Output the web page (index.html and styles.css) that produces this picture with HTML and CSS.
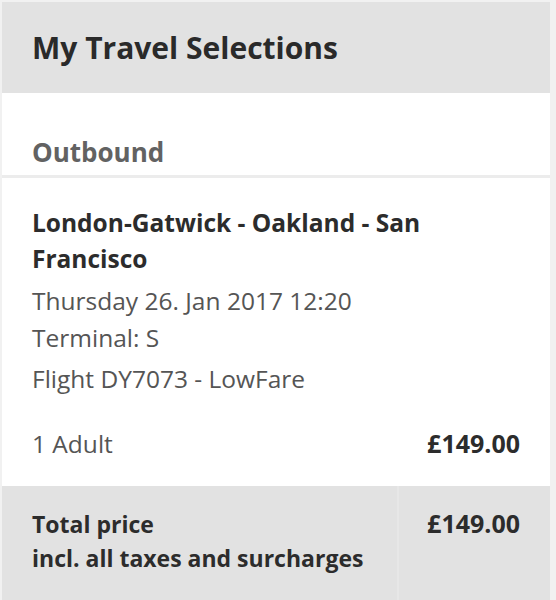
FILE: index.html
```html
<!DOCTYPE html>
<html lang="en">
<head>
<meta charset="utf-8">
<title>My Travel Selections</title>
<link rel="stylesheet" href="styles.css">
</head>
<body>
<div class="panel">
  <header class="panel-head">
    <h1 class="panel-title">My Travel Selections</h1>
  </header>
  <section class="direction">
    <h2 class="direction-title">Outbound</h2>
  </section>
  <section class="journey">
    <h3 class="route">London-Gatwick - Oakland - San Francisco</h3>
    <p class="info">Thursday 26. Jan 2017 12:20<br>Terminal: S</p>
    <p class="info flight">Flight DY7073 - LowFare</p>
    <div class="fare-row">
      <span class="pax">1 Adult</span>
      <span class="amount">£149.00</span>
    </div>
  </section>
  <section class="total">
    <div class="total-label">
      <strong>Total price</strong>
      <strong>incl. all taxes and surcharges</strong>
    </div>
    <div class="total-amount">£149.00</div>
  </section>
</div>
</body>
</html>
```
FILE: styles.css
```css
html, body {
  margin: 0;
  padding: 0;
  background: #f1f1f1;
}
body {
  font-family: "Open Sans", "Liberation Sans", sans-serif;
  color: #2c2c2c;
}
.panel {
  width: 548px;
  height: 598px;
  margin: 2px 0 0 2px;
  display: flex;
  flex-direction: column;
  background: #fff;
  overflow: hidden;
}
.panel-head {
  height: 91px;
  flex: none;
  background: #e2e2e2;
  display: flex;
  align-items: center;
  padding: 0 30px;
}
.panel-title {
  margin: 0;
  font-size: 30px;
  font-weight: 700;
  color: #2a2a2a;
  line-height: 34px;
}
.direction {
  height: 85px;
  flex: none;
  display: flex;
  align-items: flex-end;
  padding: 0 30px 8px;
  box-sizing: border-box;
  border-bottom: 3px solid #ececec;
}
.direction-title {
  margin: 0;
  font-size: 26px;
  font-weight: 700;
  color: #626262;
  line-height: 30px;
}
.journey {
  height: 308px;
  flex: none;
  padding: 27px 30px 0;
  box-sizing: border-box;
  display: flex;
  flex-direction: column;
}
.route {
  margin: 0;
  font-size: 24.5px;
  font-weight: 700;
  line-height: 36px;
  color: #2c2c2c;
  max-width: 440px;
}
.info {
  margin: 5px 0 0;
  font-size: 24.5px;
  line-height: 37px;
  color: #555;
}
.flight {
  margin-top: 4px;
}
.fare-row {
  margin-top: 31px;
  display: flex;
  justify-content: space-between;
  align-items: baseline;
  font-size: 24.5px;
  line-height: 30px;
}
.pax {
  color: #555;
}
.amount {
  font-size: 25px;
  font-weight: 700;
  color: #2c2c2c;
}
.total {
  flex: 1;
  background: #e2e2e2;
  display: flex;
}
.total-label {
  width: 365px;
  padding: 21px 0 0 30px;
  display: flex;
  flex-direction: column;
  font-size: 23px;
  line-height: 34px;
  color: #2c2c2c;
  border-right: 2px solid #e7e7e7;
}
.total-amount {
  flex: 1;
  padding: 20px 30px 0 0;
  text-align: right;
  font-size: 25px;
  font-weight: 700;
  line-height: 34px;
  color: #2c2c2c;
}
```
